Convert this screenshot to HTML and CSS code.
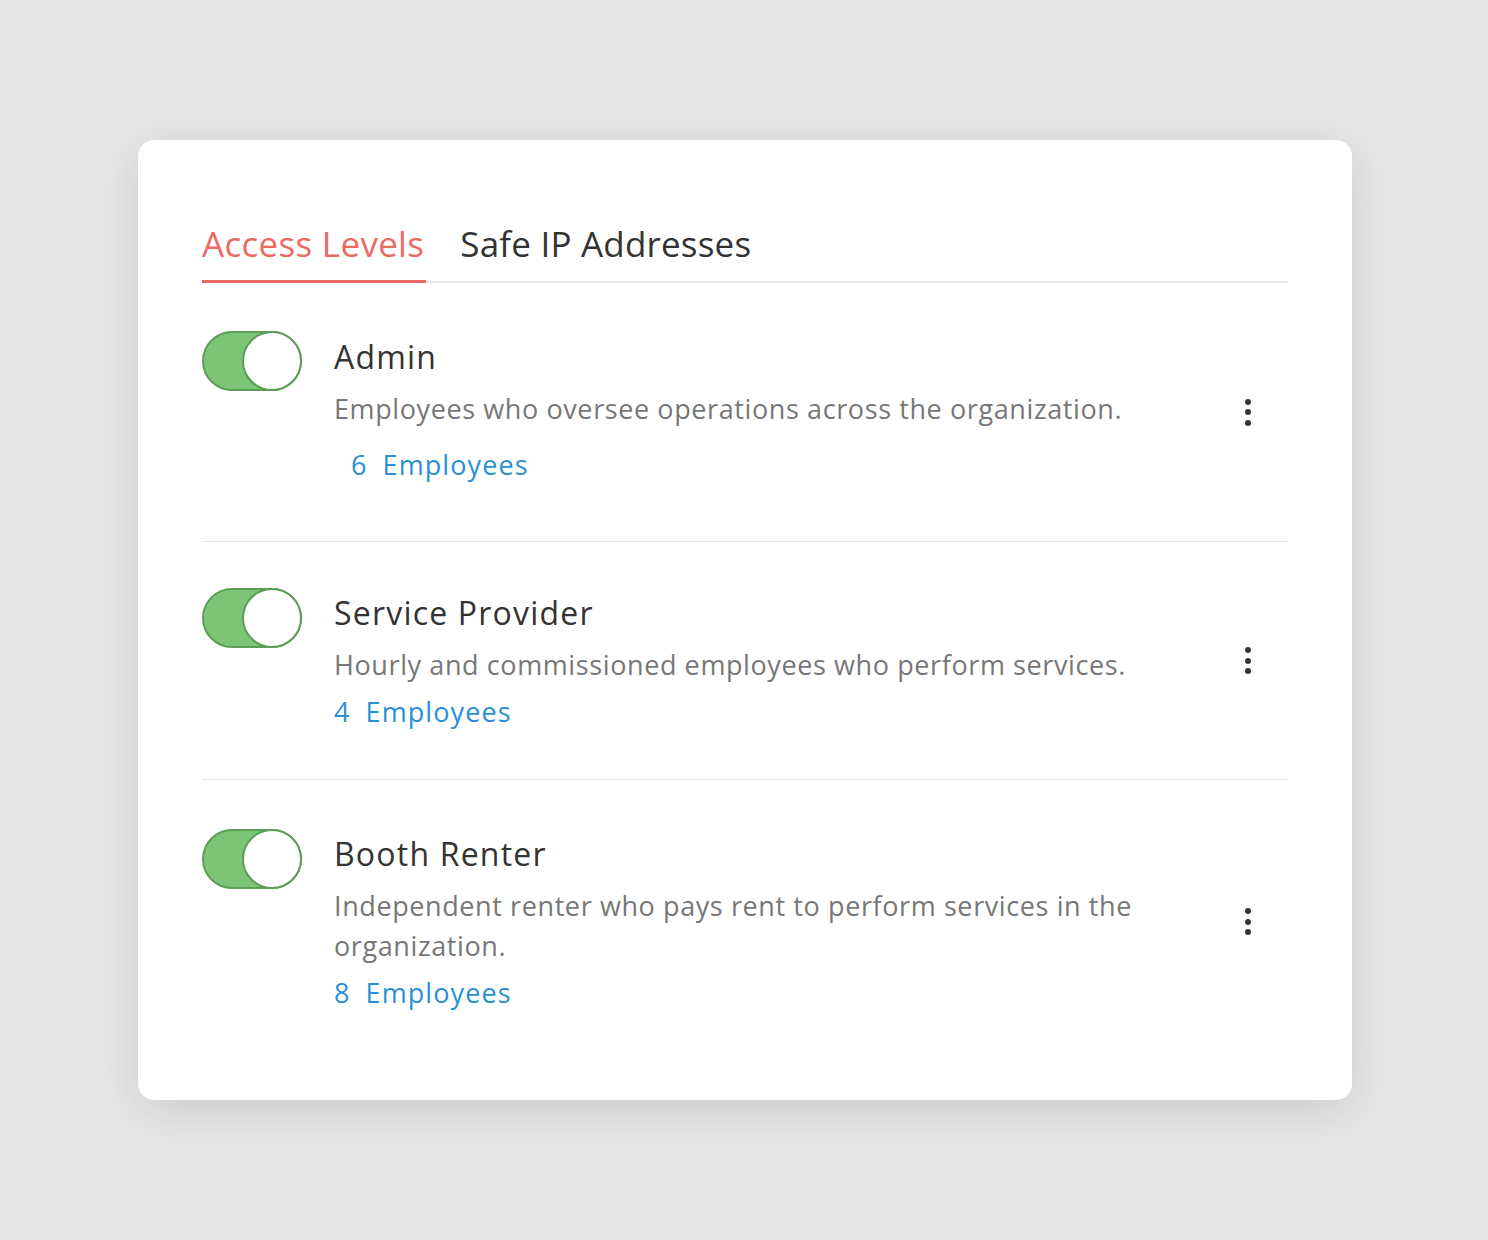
FILE: index.html
```html
<!DOCTYPE html>
<html lang="en">
<head>
<meta charset="utf-8">
<title>Access Levels</title>
<link rel="stylesheet" href="styles.css">
</head>
<body>
<div class="page">
  <div class="card">
    <div class="tabs">
      <div class="tab tab-active">Access Levels</div>
      <div class="tab">Safe IP Addresses</div>
    </div>

    <div class="row row-first">
      <div class="toggle"><span class="knob"></span></div>
      <div class="content">
        <div class="title">Admin</div>
        <div class="desc">Employees who oversee operations across the organization.</div>
        <div class="link link-indent"><span class="num">6</span>Employees</div>
      </div>
      <div class="actions"><span class="dots"><i></i><i></i><i></i></span></div>
    </div>

    <div class="row">
      <div class="toggle"><span class="knob"></span></div>
      <div class="content">
        <div class="title">Service Provider</div>
        <div class="desc">Hourly and commissioned employees who perform services.</div>
        <div class="link"><span class="num">4</span>Employees</div>
      </div>
      <div class="actions"><span class="dots"><i></i><i></i><i></i></span></div>
    </div>

    <div class="row row-last">
      <div class="toggle"><span class="knob"></span></div>
      <div class="content">
        <div class="title">Booth Renter</div>
        <div class="desc">Independent renter who pays rent to perform services in the organization.</div>
        <div class="link"><span class="num">8</span>Employees</div>
      </div>
      <div class="actions"><span class="dots"><i></i><i></i><i></i></span></div>
    </div>
  </div>
</div>
</body>
</html>
```

FILE: styles.css
```css
* { box-sizing: border-box; }
html, body {
  margin: 0;
  padding: 0;
  background: #e7e7e7;
}
body {
  font-family: "Open Sans", Lato, sans-serif;
  -webkit-font-smoothing: antialiased;
}
.page {
  min-height: 1240px;
  padding: 140px 0 0 138px;
}
.card {
  width: 1214px;
  height: 960px;
  background: #fff;
  border-radius: 16px;
  box-shadow: 0 10px 50px rgba(0, 0, 0, 0.13);
  padding: 80px 64px 0 64px;
}
.tabs {
  display: flex;
  gap: 34px;
  border-bottom: 2px solid #e6e6e6;
}
.tab {
  font-size: 35px;
  line-height: 48px;
  color: #333;
  padding-bottom: 12px;
  letter-spacing: 0.2px;
}
.tab-active {
  color: #ec6a64;
  border-bottom: 3px solid #ec6a64;
  margin-bottom: -2px;
  padding-right: 2px;
  letter-spacing: 0.3px;
}
.row {
  display: flex;
  align-items: flex-start;
  padding: 46px 0 47px 0;
  border-bottom: 1px solid #e6e6e6;
}
.row-first {
  padding-top: 48px;
  padding-bottom: 56px;
}
.row-last {
  border-bottom: none;
  padding-top: 49px;
}
.toggle {
  position: relative;
  flex: 0 0 100px;
  width: 100px;
  height: 60px;
  border-radius: 30px;
  background: #7dc576;
  border: 2px solid #5d9d57;
}
.knob {
  position: absolute;
  top: -2px;
  right: -2px;
  width: 60px;
  height: 60px;
  border-radius: 50%;
  background: #fff;
  border: 2px solid #5d9d57;
}
.content {
  flex: 1;
  margin-left: 32px;
  padding-top: 5px;
  align-self: stretch;
}
.row-first .content {
  padding-top: 6px;
}
.title {
  font-size: 32px;
  line-height: 40px;
  color: #333;
  letter-spacing: 1.2px;
}
.desc {
  margin-top: 12px;
  font-size: 27px;
  line-height: 40px;
  color: #777;
  max-width: 820px;
  letter-spacing: 0.6px;
}
.link {
  margin-top: 7px;
  font-size: 27px;
  line-height: 40px;
  color: #2b8fd6;
  letter-spacing: 1.1px;
}
.link-indent {
  margin-top: 16px;
  padding-left: 17px;
}
.num {
  margin-right: 15px;
}
.actions {
  flex: 0 0 80px;
  align-self: stretch;
  display: flex;
  align-items: center;
  justify-content: center;
  padding-top: 1px;
}
.row-first .actions {
  padding-top: 8px;
}
.dots {
  display: flex;
  flex-direction: column;
  gap: 4.5px;
}
.dots i {
  display: block;
  width: 6px;
  height: 6px;
  border-radius: 50%;
  background: #333;
}
```
